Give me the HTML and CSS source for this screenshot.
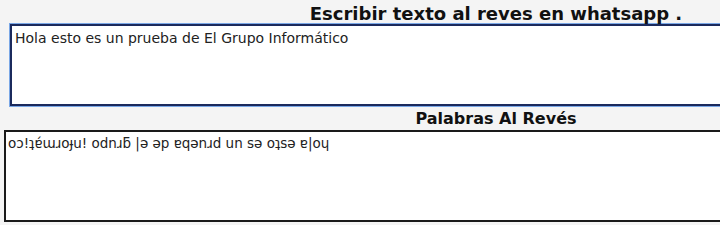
FILE: index.html
```html
<!DOCTYPE html>
<html lang="es">
<head>
  <meta charset="UTF-8" />
  <title>Escribir texto al reves en whatsapp</title>
  <link rel="stylesheet" href="styles.css">
</head>
<body>

<div class="page">
  <h2 class="title">Escribir texto al reves en whatsapp .</h2>
  <textarea id="original" class="box box-input">Hola esto es un prueba de El Grupo Informático</textarea>

  <h3 class="subtitle">Palabras Al Revés</h3>
  <textarea id="reves" class="box box-output" readonly>oɔ!ʇɐ́ɯɹoɟu! odnɹƃ |ə əp ɐqənɹd un sə oʇsə ɐ|oɥ</textarea>
</div>

<script src="app.js"></script>
</body>
</html>
```

FILE: app.js
```js
const original = document.getElementById('original');
const pos = original.value.indexOf('El Grupo');
original.focus();
original.setSelectionRange(pos, pos);
```

FILE: styles.css
```css
html, body {
  margin: 0;
  background: #f4f4f4;
  overflow: hidden;
}

.page {
  width: 992px;
  font-family: "DejaVu Sans", Verdana, sans-serif;
  color: #111;
}

.title {
  margin: 0;
  padding-top: 3px;
  height: 21px;
  font-size: 18px;
  line-height: 21px;
  text-align: center;
}

.subtitle {
  margin: 0;
  height: 22px;
  font-size: 16px;
  line-height: 22px;
  text-align: center;
}

.box {
  display: block;
  box-sizing: border-box;
  resize: none;
  background: #fff;
  font-family: "DejaVu Sans", Verdana, sans-serif;
  line-height: 16px;
  color: #222;
  outline: none;
  caret-color: #111;
}

/* caja de arriba, con foco */
.box-input {
  width: 972px;
  height: 82px;
  margin: 0 10px 2px;
  padding: 4px 3px;
  font-size: 14px;
  border: 2px solid #1b2a5c;
  box-shadow: 0 0 0 1px #7aa7e6;
}

/* caja del resultado */
.box-output {
  width: 984px;
  height: 92px;
  margin: 0 4px;
  padding: 3px 2px;
  font-size: 13.5px;
  border: 2px solid #1a1a1a;
  box-shadow: 0 1px 0 #d8d8d8;
}
```
